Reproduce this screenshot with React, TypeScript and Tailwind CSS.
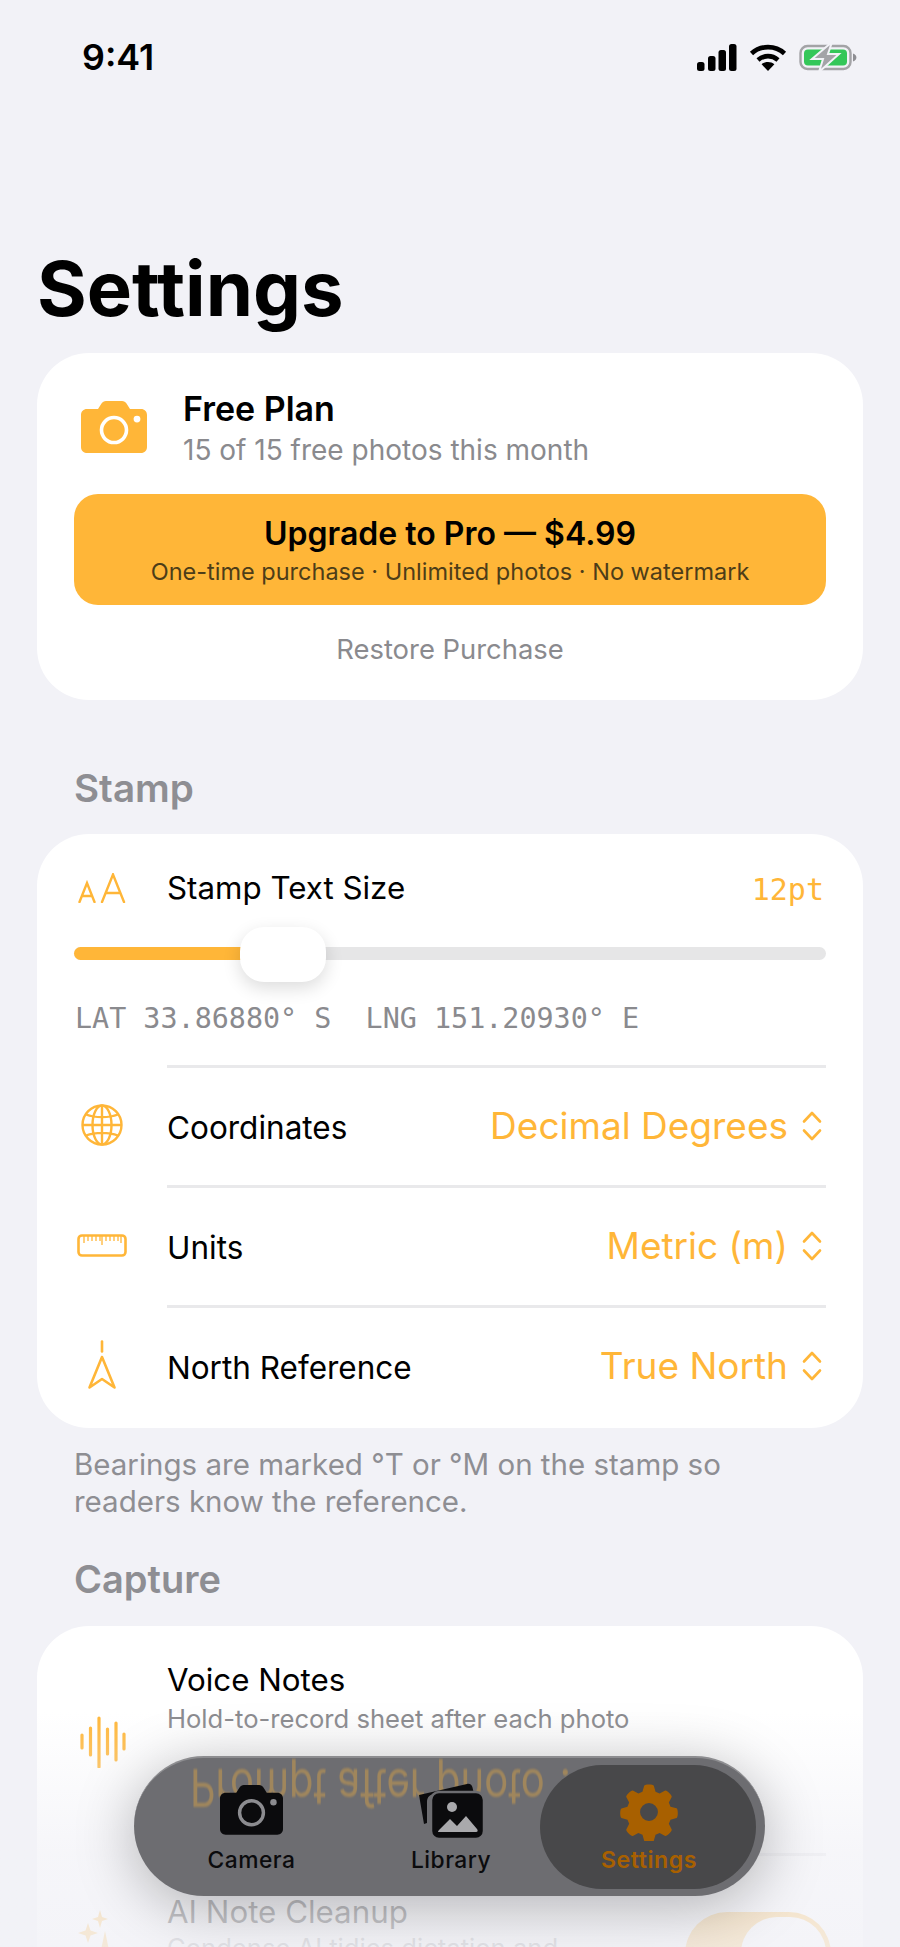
const sans = "font-['Inter',sans-serif]";

function Cellular() {
  return (
    <svg width="40" height="27" viewBox="0 0 40 27" fill="#000">
      <rect x="0" y="18" width="7.5" height="9" rx="2.5" />
      <rect x="11" y="12" width="7.5" height="15" rx="2.5" />
      <rect x="21.5" y="6" width="7.5" height="21" rx="2.5" />
      <rect x="32" y="0" width="7.5" height="27" rx="2.5" />
    </svg>
  );
}

function Wifi() {
  return (
    <svg width="38" height="27" viewBox="0 0 38 27" fill="none" stroke="#000" strokeWidth="4.6">
      <path d="M2.5 9.5C11.5 1 26.5 1 35.5 9.5" />
      <path d="M9 16c6-5.2 14-5.2 20 0" />
      <path d="M19 27l-6.4-6.8c3.6-2.8 9.2-2.8 12.8 0z" fill="#000" stroke="none" />
    </svg>
  );
}

function Battery() {
  return (
    <svg width="58" height="30" viewBox="0 0 58 30" fill="none">
      <rect x="1.5" y="4" width="50" height="23" rx="7" stroke="#a3a3a6" strokeWidth="2.4" />
      <rect x="5" y="7.5" width="43" height="16" rx="4" fill="#34c759" />
      <path d="M54 11.5c2.4.8 3.4 2.4 3.4 4s-1 3.2-3.4 4z" fill="#8e8e93" />
      <path d="M33 0L13 17h11l-4 13 20-18H29z" fill="#a3a3a7" stroke="#f2f2f7" strokeWidth="2" />
    </svg>
  );
}

function CameraGlyph({ fill, hole, size = 66 }: { fill: string; hole: string; size?: number }) {
  return (
    <svg width={size} height={size * 0.79} viewBox="0 0 66 52">
      <path
        d="M6 8h11l3.5-5.5C21.5 1 23 0 25 0h16c2 0 3.5 1 4.5 2.5L49 8h11c3.5 0 6 2.5 6 6v32c0 3.5-2.5 6-6 6H6c-3.5 0-6-2.5-6-6V14c0-3.5 2.5-6 6-6z"
        fill={fill}
      />
      <circle cx="33" cy="29" r="12.5" fill="none" stroke={hole} strokeWidth="3.6" />
      <circle cx="56" cy="18" r="3.4" fill={hole} />
    </svg>
  );
}

function AaIcon() {
  return (
    <svg width="48" height="30" viewBox="0 0 48 30" fill="none" stroke="#ffb638" strokeWidth="2.4" strokeLinecap="round">
      <path d="M1.5 29L9 10l7.5 19M4 23h10" />
      <path d="M24 29L35 1.500l11 27.500M28 20h14" />
    </svg>
  );
}

function GlobeIcon() {
  return (
    <svg width="42" height="42" viewBox="0 0 42 42" fill="none" stroke="#ffb638" strokeWidth="2.4">
      <circle cx="21" cy="21" r="19.5" />
      <ellipse cx="21" cy="21" rx="9.5" ry="19.5" />
      <path d="M21 1.5v39M1.5 21h39M5 10.500c9 3.500 23 3.500 32 0M5 31.500c9-3.500 23-3.500 32 0" />
    </svg>
  );
}

function RulerIcon() {
  return (
    <svg width="50" height="23" viewBox="0 0 50 23" fill="none" stroke="#ffb638">
      <rect x="1.5" y="1.5" width="47" height="20" rx="3.5" strokeWidth="2.6" />
      <path
        d="M7 2v7M11 2v5M15 2v5M19 2v5M23 2v5M25 2v9M29 2v5M33 2v5M37 2v5M41 2v5M44 2v7"
        strokeWidth="1.3"
      />
    </svg>
  );
}

function NorthIcon() {
  return (
    <svg width="30" height="50" viewBox="0 0 30 50" fill="none" stroke="#ffb638" strokeLinecap="round" strokeLinejoin="round">
      <path d="M15 1.5v10" strokeWidth="2.6" />
      <path d="M15 17L2.5 47.5 15 39l12.5 8.5z" strokeWidth="2.6" />
    </svg>
  );
}

function WaveIcon() {
  return (
    <svg width="46" height="52" viewBox="0 0 46 52" fill="none" stroke="#ffb638" strokeWidth="3.2" strokeLinecap="round">
      <path d="M2 19v13M10.500 12v27M19 2v49M27.500 13v25M36 7v37M44 18v15" />
    </svg>
  );
}

function Sparkles() {
  return (
    <svg width="40" height="60" viewBox="0 0 40 60" fill="#ffb638">
      <path d="M22 1l2 7 6 2-6 2-2 7-2-7-6-2 6-2z" />
      <path d="M10 14l2.5 7.5L20 24l-7.5 2.5L10 34l-2.5-7.5L0 24l7.5-2.5z" />
      <path d="M27 22l4 19 9 3-9 3-4 13-4-13-9-3 9-3z" />
    </svg>
  );
}

function UpDown() {
  return (
    <svg width="22" height="30" viewBox="0 0 22 30" fill="none" stroke="#ffb638" strokeWidth="2.6" strokeLinecap="round" strokeLinejoin="round">
      <path d="M3 10.5L11 2l8 8.5M3 19.5L11 28l8-8.5" />
    </svg>
  );
}

function PickerRow({ icon, label, value }: { icon: React.ReactNode; label: string; value: string }) {
  return (
    <div className="flex h-[120px] items-center">
      <div className="flex w-[130px] shrink-0 justify-center">{icon}</div>
      <div className="flex h-full flex-1 items-center justify-between border-t-[3px] border-[#e9e9eb]">
        <span className="pt-[3px] text-[31.5px] text-black">{label}</span>
        <span className="flex items-center gap-[13px] pb-[2px] pr-[3px] text-[37px] text-[#ffb638]">
          {value}
          <UpDown />
        </span>
      </div>
    </div>
  );
}

function TabBar() {
  return (
    <div className="absolute left-[134px] top-[1756px] flex h-[140px] w-[631px] items-start overflow-hidden rounded-[70px] border-t-2 border-[#8d8d90] bg-[#6d6d71] shadow-[0_10px_60px_rgba(0,0,0,0.28)]">
      {/* flipped reflection of the row passing under the glass */}
      <span className="absolute left-[56px] top-[9px] [transform:scaleY(-1.3)] whitespace-nowrap text-[40px] leading-[40px] text-[#ffb638] opacity-35 blur-[0.7px]">
        Prompt after photo ?
      </span>
      <div className="absolute bottom-[7px] right-[9px] h-[124px] w-[216px] rounded-[62px] bg-[#48484a]" />
      <div className="relative flex w-[235px] flex-col items-center pt-[27px]">
        <CameraGlyph fill="#0b0b0d" hole="#8c8c90" size={63} />
        <span className="mt-[10px] text-[22.8px] font-medium leading-[30px] tracking-[0.5px] text-[#0b0b0d]">Camera</span>
      </div>
      <div className="relative flex w-[164px] flex-col items-center pt-[25px]">
        <svg width="68" height="56" viewBox="0 0 68 56">
          <path d="M2 12L50 1c3-.6 5 1 5.500 3.500L57 11H18c-5 0-8 3-8 8v21l-3 1z" fill="#0b0b0d" />
          <rect x="14" y="9" width="53" height="47" rx="8" fill="#0b0b0d" stroke="#6d6d71" strokeWidth="2.5" />
          <circle cx="35" cy="24" r="5" fill="#a9a9ac" />
          <path d="M21 49c0-1 1-2 2-3l10-10 7 7 9-10 11 13c1 1 1 3-1 3H23c-1 0-2 0-2 0z" fill="#a9a9ac" />
        </svg>
        <span className="mt-[6px] text-[22.8px] font-medium leading-[30px] tracking-[0.5px] text-[#0b0b0d]">Library</span>
      </div>
      <div className="relative flex flex-1 flex-col items-center pt-[25px]">
        <svg width="58" height="58" viewBox="0 0 24 24" fill="#a86000">
          <path
            fillRule="evenodd"
            d="M10 1.100c.3-.7 3.700-.7 4 0l.7 2.500 1.700.7 2.300-1.200c.6-.3 3 2.100 2.700 2.700l-1.200 2.300.7 1.700 2.500.7c.7.3.7 3.700 0 4l-2.500.7-.7 1.700 1.200 2.300c.3.6-2.100 3-2.700 2.700l-2.300-1.200-1.700.7-.7 2.500c-.3.7-3.700.7-4 0l-.7-2.500-1.700-.7-2.300 1.200c-.6.3-3-2.100-2.700-2.700l1.200-2.300-.7-1.700-2.500-.7c-.7-.3-.7-3.700 0-4l2.500-.7.7-1.700-1.200-2.300c-.3-.6 2.100-3 2.700-2.700l2.300 1.200 1.700-.7zM12 8.300a3.700 3.700 0 100 7.400 3.700 3.700 0 000-7.400z"
          />
        </svg>
        <span className="mt-[4px] text-[23.2px] font-semibold leading-[30px] tracking-[0.5px] text-[#a86000]">Settings</span>
      </div>
    </div>
  );
}

export default function App() {
  return (
    <div className={`relative h-[1947px] w-[900px] overflow-hidden bg-[#f2f2f7] ${sans}`}>
      {/* status bar */}
      <div className="flex h-[114px] items-center justify-between pl-[82px] pr-[43px]">
        <span className="pt-[2px] text-[35.8px] font-semibold text-black">9:41</span>
        <div className="flex items-center gap-[12px]">
          <Cellular />
          <Wifi />
          <Battery />
        </div>
      </div>

      <div className="px-[37px]">
        <h1 className="mt-[133px] text-[76px] font-bold leading-[82px] text-black">Settings</h1>

        {/* plan */}
        <section className="mt-[24px] h-[347px] rounded-[52px] bg-white px-[37px] pt-[38px]">
          <div className="flex h-[66px] items-center">
            <div className="ml-[7px] mr-[36px] mt-[6px]">
              <CameraGlyph fill="#ffb638" hole="#ffffff" />
            </div>
            <div className="flex flex-col pt-[10px]">
              <span className="text-[34px] font-semibold leading-[42px] text-black">Free Plan</span>
              <span className="text-[28px] leading-[40px] text-[#8a8a8e]">15 of 15 free photos this month</span>
            </div>
          </div>
          <div className="mt-[37px] flex h-[111px] flex-col items-center rounded-[24px] bg-[#ffb638] pt-[18px]">
            <span className="text-[32px] font-semibold leading-[44px] text-black">Upgrade to Pro — $4.99</span>
            <span className="text-[23.5px] leading-[32px] text-[#4d3d18]">
              One-time purchase · Unlimited photos · No watermark
            </span>
          </div>
          <p className="mt-[27px] text-center text-[27.4px] leading-[34px] text-[#8a8a8e]">Restore Purchase</p>
        </section>

        {/* stamp */}
        <h2 className="mt-[66px] pl-[37px] text-[38.6px] font-semibold leading-[44px] text-[#8e8e93]">Stamp</h2>
        <section className="mt-[24px] h-[594px] overflow-hidden rounded-[52px] bg-white">
          <div className="px-[37px] pt-[34px]">
            <div className="flex h-[40px] items-center justify-between">
              <div className="flex items-center">
                <div className="ml-[4px]">
                  <AaIcon />
                </div>
                <span className="ml-[41px] text-[31.3px] text-black">Stamp Text Size</span>
              </div>
              <span className="pr-[2px] pt-[3px] font-['DejaVu_Sans_Mono',monospace] text-[30px] text-[#ffb638]">12pt</span>
            </div>
            <div className="relative mt-[39px] h-[13px] rounded-full bg-[#e6e6e7]">
              <div className="h-full w-[190px] rounded-l-full bg-[#ffb638]" />
              <div className="absolute left-[166px] top-[-20px] h-[55px] w-[86px] rounded-[24px] bg-white shadow-[0_6px_18px_rgba(0,0,0,0.14)]" />
            </div>
            <p className="mt-[41px] whitespace-pre pl-[1px] font-['DejaVu_Sans_Mono',monospace] text-[28.4px] leading-[36px] text-[#8a8a8e]">
              LAT 33.86880° S  LNG 151.20930° E
            </p>
          </div>
          <div className="mt-[28px] pr-[37px]">
            <PickerRow icon={<GlobeIcon />} label="Coordinates" value="Decimal Degrees" />
            <PickerRow icon={<RulerIcon />} label="Units" value="Metric (m)" />
            <PickerRow icon={<NorthIcon />} label="North Reference" value="True North" />
          </div>
        </section>
        <p className="mt-[18px] pl-[37px] text-[29.5px] leading-[37px] text-[#8e8e93]">
          Bearings are marked °T or °M on the stamp so
          <br />
          readers know the reference.
        </p>

        {/* capture */}
        <h2 className="mt-[37px] pl-[37px] text-[38px] font-semibold leading-[44px] text-[#8e8e93]">Capture</h2>
        <section className="mt-[25px] h-[500px] rounded-[52px] bg-white pr-[37px]">
          <div className="flex h-[230px]">
            <div className="flex w-[130px] shrink-0 justify-center pl-[1px] pt-[90px]">
              <WaveIcon />
            </div>
            <div className="flex-1 border-b-[3px] border-[#e9e9eb] pt-[33px]">
              <p className="text-[31.3px] leading-[42px] text-black">Voice Notes</p>
              <p className="text-[25.6px] leading-[36px] text-[#8a8a8e]">Hold-to-record sheet after each photo</p>
            </div>
          </div>
          <div className="flex">
            <div className="flex w-[130px] shrink-0 justify-start pl-[41px] pt-[53px]">
              <Sparkles />
            </div>
            <div className="flex flex-1 justify-between pt-[34px]">
              <div>
                <p className="text-[31.3px] leading-[44px] text-black">AI Note Cleanup</p>
                <p className="mt-[-4px] text-[25.6px] leading-[36px] text-[#8a8a8e]">Condense AI tidies dictation and</p>
              </div>
              <div className="mr-[-5px] mt-[22px] h-[90px] w-[146px] rounded-[42px] bg-[#ffb638] pl-[56px] pt-[5px]">
                <div className="h-[80px] w-[85px] rounded-[36px] bg-white" />
              </div>
            </div>
          </div>
        </section>
      </div>

      {/* page content fades out toward the bottom */}
      <div className="pointer-events-none absolute inset-x-0 bottom-0 h-[235px] bg-gradient-to-b from-[#f2f2f7]/0 via-[#f2f2f7]/70 via-60% to-[#f2f2f7]/85" />
      <TabBar />
    </div>
  );
}
